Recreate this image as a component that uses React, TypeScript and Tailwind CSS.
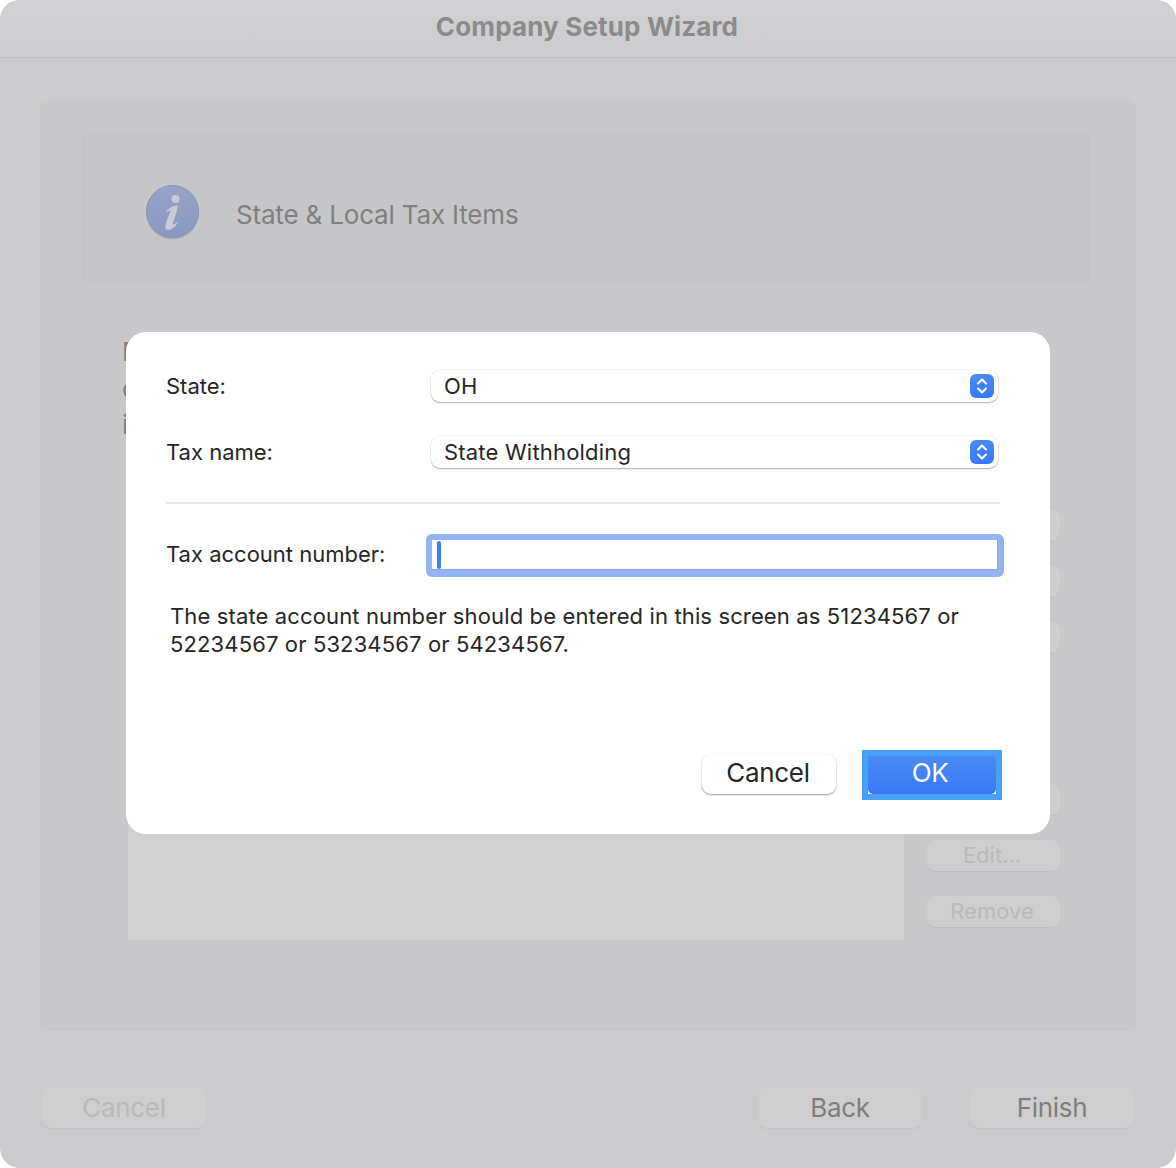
const font = { fontFamily: "Inter, 'Liberation Sans', sans-serif" }

// disabled button of the dimmed window behind the sheet
const GhostButton = ({ label, className }: { label?: string; className: string }) => {
  return (
    <div className={`flex items-center justify-center rounded-[9px] bg-[#cecece] shadow-[0_1px_1px_rgba(0,0,0,0.05)] ${className}`}>
      {label}
    </div>
  )
}

const SelectBox = ({ value }: { value: string }) => {
  return (
    <div className="flex h-[32px] w-[567px] items-center justify-between rounded-[9px] bg-white pl-[13px] pr-[4px] tracking-[0.2px] shadow-[0_0_0_0.5px_rgba(0,0,0,0.06),0_1px_1.5px_rgba(0,0,0,0.3)]">
      <span>{value}</span>
      <div className="flex h-6 w-6 items-center justify-center rounded-[6px] bg-gradient-to-b from-[#4a8af7] to-[#3878f6]">
        <svg width="14" height="18" viewBox="0 0 14 18" fill="none" stroke="white" strokeWidth="2" strokeLinecap="round" strokeLinejoin="round">
          <path d="M3 6.5 L7 2.5 L11 6.5" />
          <path d="M3 11.5 L7 15.5 L11 11.5" />
        </svg>
      </div>
    </div>
  )
}

export default function App() {
  return (
    <div className="relative h-[1168px] w-[1176px] overflow-hidden bg-white" style={font}>
      {/* ventana de fondo */}
      <div className="flex h-full flex-col overflow-hidden rounded-[20px] bg-[#cbcbcd]">
        <div className="flex h-[58px] shrink-0 items-center justify-center border-b border-[#bebec0] bg-gradient-to-b from-[#d1d1d3] to-[#cccccf] pb-[4px] text-[26px] font-bold leading-[50px] tracking-[0.15px] text-[#8b8b8b]">
          <span className="ml-[-2px]">Company Setup Wizard</span>
        </div>

        <div className="flex flex-col px-10 pt-[43px]">
          <div className="h-[929px] rounded-[8px] border border-[#c5c5c7] bg-[#c8c8ca] pl-[41px] pr-[45px] pt-[31px]">
            <div className="flex h-[151px] items-center rounded-[8px] border border-[#c4c4c6] bg-[#c6c6c8] pl-[63px]">
              <svg width="54" height="56" viewBox="0 0 54 56" className="mt-[8px] shrink-0">
                <defs>
                  <linearGradient id="infoFill" x1="0" y1="0" x2="0" y2="1">
                    <stop offset="0" stopColor="#98a2c5" />
                    <stop offset="1" stopColor="#8a98c2" />
                  </linearGradient>
                </defs>
                <circle cx="26.5" cy="28" r="26.5" fill="#000" opacity="0.12" />
                <circle cx="26.5" cy="26.5" r="26" fill="url(#infoFill)" stroke="#8493bd" />
                <circle cx="29.5" cy="14" r="4" fill="#c9cbd2" />
                <path d="M19.5 28 C22.5 22.5 27 20 32 20.5 C31 27 28 34 27 38 C26.5 40 28.5 39.5 32 36.5 C30.5 41 25.5 45 22 45 C19 45 19 42 20 38 C21.5 33 23.5 29 24.5 25.5 C23 25.5 21.5 26.5 19.5 28 Z" fill="#c9cbd2" />
              </svg>
              <span className="ml-[36px] mt-[11px] text-[26px] tracking-[-0.18px] text-[#808080]">State &amp; Local Tax Items</span>
            </div>

            <div className="mt-[52px] flex">
              <div className="w-[844px] shrink-0 pl-[40px]">
                <div className="flex h-[105px] flex-col justify-between text-[26px] leading-[32px] text-[#808080]">
                  <span>M</span>
                  <span>c</span>
                  <span>i</span>
                </div>
                <div className="ml-[6px] mt-[296px] h-[203px] w-[776px] bg-[#d1d1d1]" />
              </div>
              <div className="flex w-[134px] shrink-0 flex-col text-[22px] text-[#bababa]">
                <GhostButton className="mt-[174px] h-[31px]" />
                <GhostButton className="mt-[25px] h-[31px]" />
                <GhostButton className="mt-[25px] h-[31px]" />
                <GhostButton className="mt-[131px] h-[31px]" />
                <GhostButton label="Edit..." className="mt-[25px] h-[31px] pr-[2px]" />
                <GhostButton label="Remove" className="mt-[25px] h-[31px] pr-[2px]" />
              </div>
            </div>
          </div>
        </div>

        <div className="mt-[58px] flex pl-[42px] text-[26px] tracking-[-0.3px]">
          <GhostButton label="Cancel" className="h-[40px] w-[164px] pb-[2px] text-[#b9b9b9]" />
          <GhostButton label="Back" className="ml-[552px] h-[40px] w-[164px] pb-[2px] text-[#7e7e7e]" />
          <GhostButton label="Finish" className="ml-[48px] h-[40px] w-[164px] pb-[2px] text-[#7e7e7e]" />
        </div>
      </div>

      {/* sheet */}
      <div className="absolute left-[126px] top-[332px] h-[502px] w-[924px] rounded-[20px] bg-white pl-10 pt-[38px] text-[22px] text-[#262626]">
        <div className="flex h-[32px] items-center">
          <span className="w-[265px] shrink-0">State:</span>
          <SelectBox value="OH" />
        </div>
        <div className="mt-[34px] flex h-[32px] items-center">
          <span className="w-[265px] shrink-0">Tax name:</span>
          <SelectBox value="State Withholding" />
        </div>
        <div className="mt-[34px] h-[2px] w-[834px] bg-[#e6e6e6]" />
        <div className="mt-[30px] flex h-[43px] items-center">
          <span className="mt-[-3px] w-[260px] shrink-0">Tax account number:</span>
          <div className="flex h-[43px] w-[578px] items-center rounded-[6px] border-[6px] border-b-[7px] border-[#93b3f4] bg-white pl-[5px] shadow-[inset_-1px_-1px_0_#83a6f0]">
            <div className="h-[28px] w-[4px] rounded-full bg-[#3f7ef7]" />
          </div>
        </div>
        <p className="ml-[4px] mt-[25px] w-[800px] leading-[28px] tracking-[0.13px]">
          The state account number should be entered in this screen as 51234567 or 52234567 or 53234567 or 54234567.
        </p>
        <div className="mt-[92px] flex items-center text-[26px] tracking-[-0.3px]">
          <button className="mb-[2px] ml-[536px] flex h-[40px] w-[134px] items-center justify-center rounded-[9px] bg-white pb-[4px] pr-[2px] shadow-[0_1px_2px_rgba(0,0,0,0.4)]">Cancel</button>
          <div className="ml-[26px] bg-[#48a0f8] p-[6px]">
            <div className="bg-white">
              <button className="flex h-[38px] w-[128px] items-center justify-center rounded-b-[5px] rounded-tr-[1px] bg-gradient-to-b from-[#4a8af7] to-[#3a78f6] pb-[6px] pr-[4px] text-white">OK</button>
            </div>
          </div>
        </div>
      </div>
    </div>
  )
}
